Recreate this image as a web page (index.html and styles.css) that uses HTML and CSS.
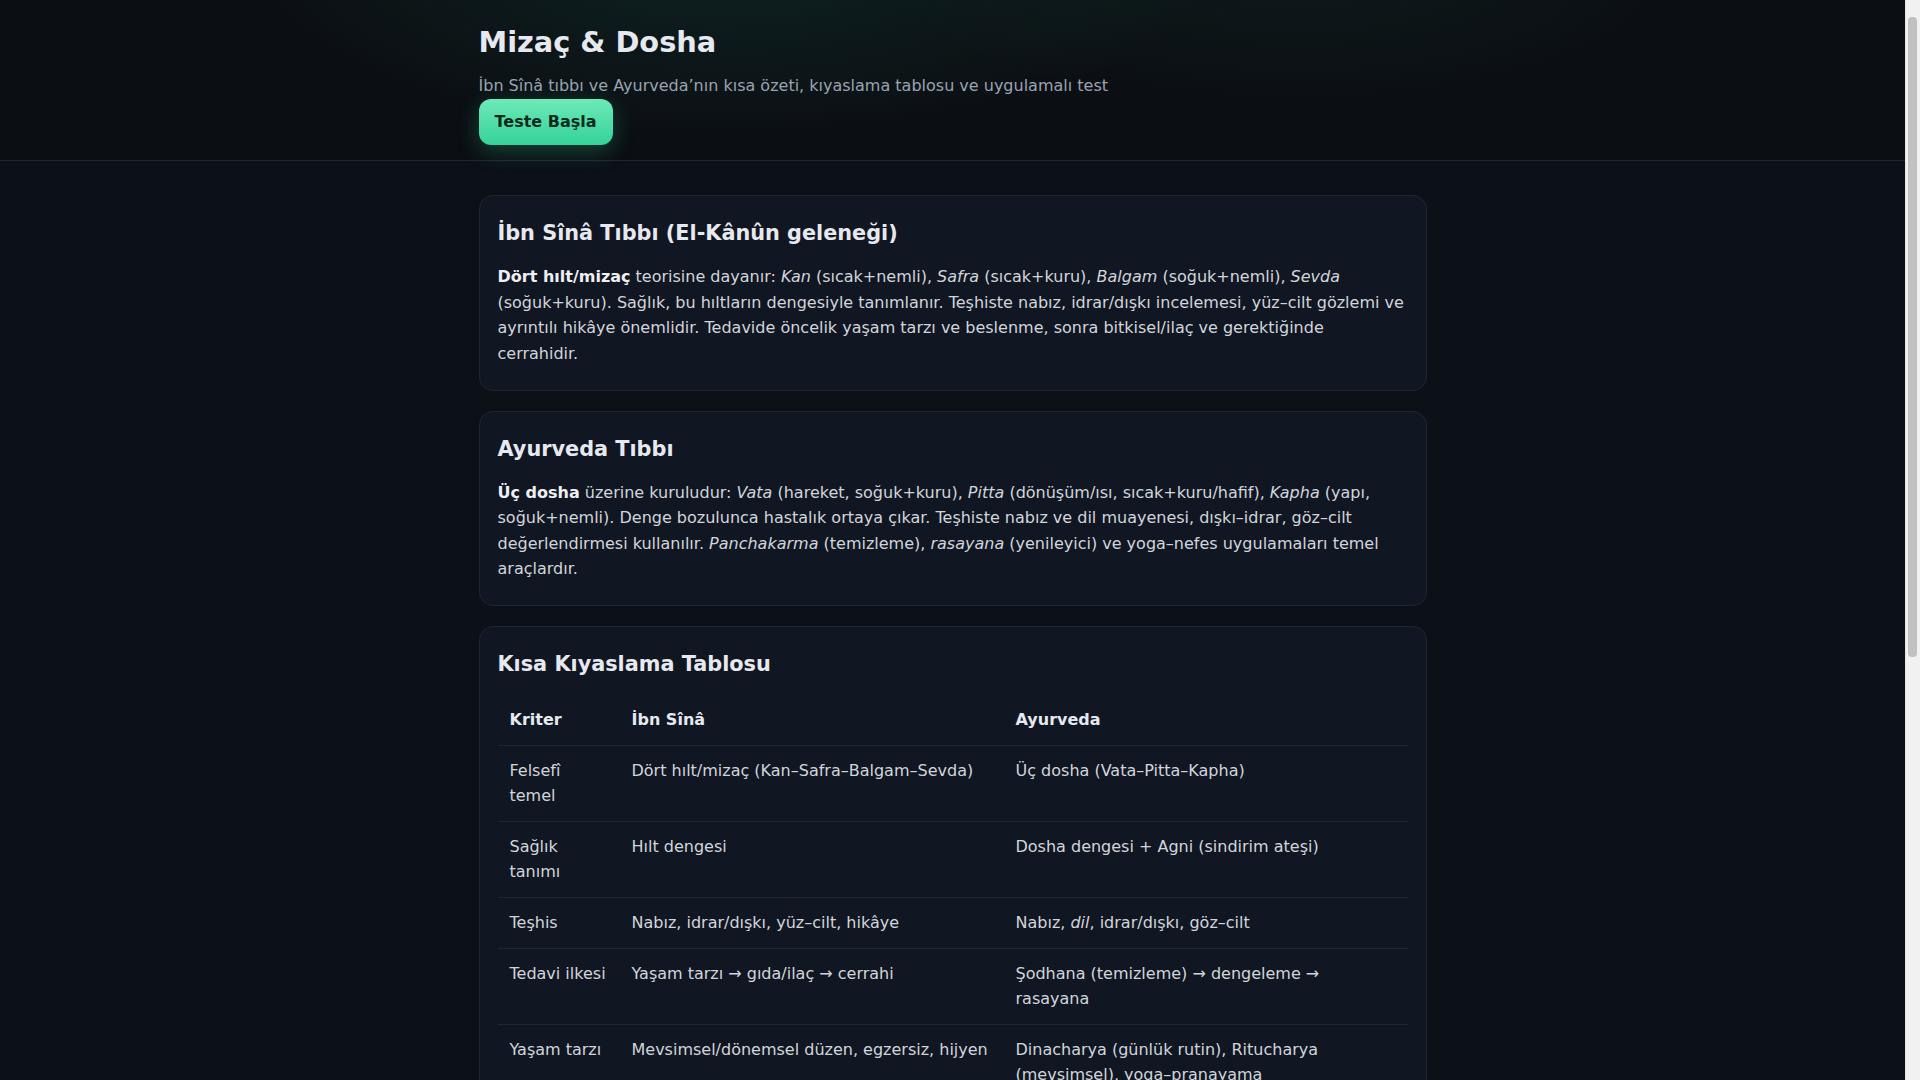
FILE: index.html
```html
<!DOCTYPE html>
<html lang="tr">
<head>
	<meta charset="utf-8"/>
	<title>Mizaç &amp; Dosha</title>
	<link rel="stylesheet" href="styles.css">
</head>
<body>
	<header class="hero">
		<div class="wrap hero-inner">
			<h1>Mizaç &amp; Dosha</h1>
			<p class="lead">İbn Sînâ tıbbı ve Ayurveda’nın kısa özeti, kıyaslama tablosu ve uygulamalı test</p>
			<button class="btn" type="button">Teste Başla</button>
		</div>
	</header>

	<main class="wrap main">
		<section class="card">
			<h2>İbn Sînâ Tıbbı (El-Kânûn geleneği)</h2>
			<p><b>Dört hılt/mizaç</b> teorisine dayanır: <i>Kan</i> (sıcak+nemli), <i>Safra</i> (sıcak+kuru), <i>Balgam</i> (soğuk+nemli), <i>Sevda</i> (soğuk+kuru). Sağlık, bu hıltların dengesiyle tanımlanır. Teşhiste nabız, idrar/dışkı incelemesi, yüz–cilt gözlemi ve ayrıntılı hikâye önemlidir. Tedavide öncelik yaşam tarzı ve beslenme, sonra bitkisel/ilaç ve gerektiğinde cerrahidir.</p>
		</section>

		<section class="card">
			<h2>Ayurveda Tıbbı</h2>
			<p><b>Üç dosha</b> üzerine kuruludur: <i>Vata</i> (hareket, soğuk+kuru), <i>Pitta</i> (dönüşüm/ısı, sıcak+kuru/hafif), <i>Kapha</i> (yapı, soğuk+nemli). Denge bozulunca hastalık ortaya çıkar. Teşhiste nabız ve dil muayenesi, dışkı–idrar, göz–cilt değerlendirmesi kullanılır. <i>Panchakarma</i> (temizleme), <i>rasayana</i> (yenileyici) ve yoga–nefes uygulamaları temel araçlardır.</p>
		</section>

		<section class="card">
			<h2>Kısa Kıyaslama Tablosu</h2>
			<table class="compare">
				<thead>
					<tr>
						<th class="col-key">Kriter</th>
						<th class="col-ibn">İbn Sînâ</th>
						<th>Ayurveda</th>
					</tr>
				</thead>
				<tbody>
					<tr>
						<td>Felsefî temel</td>
						<td>Dört hılt/mizaç (Kan–Safra–Balgam–Sevda)</td>
						<td>Üç dosha (Vata–Pitta–Kapha)</td>
					</tr>
					<tr>
						<td>Sağlık tanımı</td>
						<td>Hılt dengesi</td>
						<td>Dosha dengesi + Agni (sindirim ateşi)</td>
					</tr>
					<tr>
						<td>Teşhis</td>
						<td>Nabız, idrar/dışkı, yüz–cilt, hikâye</td>
						<td>Nabız, <i>dil</i>, idrar/dışkı, göz–cilt</td>
					</tr>
					<tr>
						<td>Tedavi ilkesi</td>
						<td>Yaşam tarzı → gıda/ilaç → cerrahi</td>
						<td>Şodhana (temizleme) → dengeleme → rasayana</td>
					</tr>
					<tr>
						<td>Yaşam tarzı</td>
						<td>Mevsimsel/dönemsel düzen, egzersiz, hijyen</td>
						<td>Dinacharya (günlük rutin), Ritucharya (mevsimsel), yoga–pranayama</td>
					</tr>
					<tr>
						<td>Temel metin</td>
						<td>El-Kânûn fi’t-Tıb</td>
						<td>Charaka ve Sushruta Samhita</td>
					</tr>
				</tbody>
			</table>
		</section>

		<section class="card" id="test">
			<h2>Mizaç / Dosha Testi</h2>
			<p>Her soru için size en uygun seçeneği işaretleyin. Sonuç yalnızca bilgilendirme amaçlıdır.</p>
		</section>
	</main>

	<div class="scrollbar"><div class="thumb"></div></div>
</body>
</html>
```

FILE: styles.css
```css
* {
	box-sizing: border-box;
}
body {
	margin: 0;
	padding-right: 15px;
	background: #0c1017;
	color: #d1d5db;
	font-family: "DejaVu Sans", "Noto Sans", sans-serif;
	font-size: 16px;
	line-height: 1.6;
}
.wrap {
	max-width: 980px;
	margin: 0 auto;
	padding: 0 16px;
}

/* header */
.hero {
	background:
		radial-gradient(700px 260px at 38% -40px, rgba(45, 212, 160, 0.10), transparent 70%),
		radial-gradient(600px 220px at 68% -40px, rgba(45, 212, 160, 0.06), transparent 70%),
		#0b0e13;
	border-bottom: 1px solid #1f2637;
	padding: 25px 0 15px;
}
.hero-inner {
	display: flex;
	flex-direction: column;
	align-items: flex-start;
}
.hero h1 {
	margin: 0;
	font-size: 28.8px;
	line-height: 1.2;
	color: #e6e9ef;
}
.lead {
	margin: 16px 0 0;
	line-height: normal;
	color: #9aa3b2;
}
.btn {
	margin-top: 4px;
	padding: 10px 16px 11px;
	border: 0;
	border-radius: 12px;
	background: linear-gradient(180deg, #6ee9b9, #34d399);
	color: #062a1d;
	font-family: inherit;
	font-size: 16px;
	font-weight: bold;
	line-height: 1.6;
	box-shadow: 0 6px 22px rgba(52, 211, 153, 0.28);
	cursor: pointer;
}

/* cards */
.main {
	padding-top: 34px;
	padding-bottom: 40px;
}
.card {
	background: #111722;
	border: 1px solid #1e2532;
	border-radius: 14px;
	padding: 24px 18px 18px;
	margin-bottom: 20px;
}
.card h2 {
	margin: 0 0 17px;
	font-size: 20.8px;
	line-height: 1.3;
	color: #e6e9ef;
}
.card p {
	margin: 0 0 5px;
}
.card b {
	color: #eef0f4;
}

/* table */
.compare {
	width: 100%;
	border-collapse: collapse;
	table-layout: fixed;
}
.compare th,
.compare td {
	padding: 12px;
	text-align: left;
	vertical-align: top;
	border-bottom: 1px solid #1f2633;
}
.compare th {
	color: #e6e9ef;
}
.col-key {
	width: 122px;
}
.col-ibn {
	width: 384px;
}

/* window scrollbar, drawn over the page edge */
.scrollbar {
	position: fixed;
	top: 0;
	right: 0;
	bottom: 0;
	width: 15px;
	background: #f1f1f1;
	border-left: 1px solid #e4e4e4;
}
.thumb {
	margin: 17px 3px 0 2px;
	height: 640px;
	border-radius: 4px;
	background: #c1c1c1;
}
```
